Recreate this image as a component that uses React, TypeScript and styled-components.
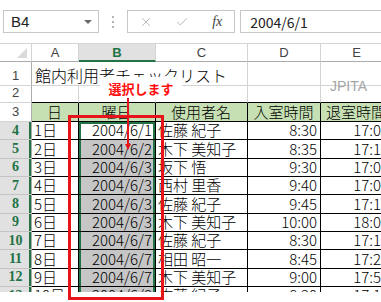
import { Fragment } from 'react'
import styled, { createGlobalStyle } from 'styled-components'
import { X, Check } from 'lucide-react'

const JP = `"Noto Sans CJK JP", "Noto Sans", sans-serif`
const GREEN = '#217346'
const GRID = '#d4d4d4'
const RED = '#e8141b'

const GlobalStyle = createGlobalStyle`
  html, body { margin: 0; padding: 0; background: #fff; }
  body { font-family: ${JP}; }
`

// ─── Formula bar ──────────────────────────────────────────────────────────────

const Screen = styled.div`
  position: relative;
  width: 381px;
  height: 302px;
  overflow: hidden;
  background: #fff;
`

const FormulaBar = styled.div`
  height: 43px;
  box-sizing: border-box;
  padding: 10px 0 0 3px;
  display: flex;
  align-items: flex-start;
`

const NameBox = styled.div`
  width: 102px;
  height: 23px;
  box-sizing: border-box;
  border: 1px solid #c6c6c6;
  display: flex;
  align-items: center;
  justify-content: space-between;
  padding: 0 6px 0 7px;
  font-family: "Liberation Sans", sans-serif;
  font-size: 15px;
  color: #222;
`

const Caret = styled.span`
  width: 0;
  height: 0;
  border-left: 4px solid transparent;
  border-right: 4px solid transparent;
  border-top: 4px solid #6b6b6b;
`

const Dots = styled.div`
  width: 30px;
  height: 23px;
  display: flex;
  flex-direction: column;
  align-items: center;
  justify-content: center;
  gap: 3px;

  i {
    width: 2px;
    height: 2px;
    background: #b4b4b4;
  }
`

const ButtonBox = styled.div`
  width: 108px;
  height: 23px;
  box-sizing: border-box;
  border: 1px solid #c6c6c6;
  display: grid;
  grid-template-columns: 36px 36px 34px;
  align-items: center;
  justify-items: center;
  color: #b4b4b4;
`

const Fx = styled.span`
  font-family: "Liberation Serif", serif;
  font-style: italic;
  font-size: 14px;
  color: #444;
`

const FormulaInput = styled.div`
  margin-left: 5px;
  width: 150px;
  height: 23px;
  box-sizing: border-box;
  border: 1px solid #c6c6c6;
  border-right: none;
  display: flex;
  align-items: center;
  padding-left: 9px;
  font-family: ${JP};
  font-size: 14px;
  color: #222;
`

// ─── Sheet grid ───────────────────────────────────────────────────────────────

const Sheet = styled.div`
  width: 400px;
  height: 249px;
  overflow: hidden;
  display: grid;
  grid-template-columns: 32px 47px 77px 92px 73px 72px;
  grid-template-rows: 18px 24px 17px 19px repeat(10, 18.33px);
  border-top: 1px solid ${GRID};
  box-sizing: border-box;
`

const Corner = styled.div`
  position: relative;
  border-right: 1px solid ${GRID};
  border-bottom: 1px solid #ababab;

  &::after {
    content: '';
    position: absolute;
    right: 4px;
    bottom: 3px;
    border-left: 10px solid transparent;
    border-bottom: 10px solid #dadada;
  }
`

const ColHead = styled.div<{ $sel?: boolean }>`
  box-sizing: border-box;
  display: flex;
  align-items: center;
  justify-content: center;
  border-right: 1px solid ${GRID};
  border-bottom: ${({ $sel }) => ($sel ? `2px solid ${GREEN}` : '1px solid #ababab')};
  background: ${({ $sel }) => ($sel ? '#e1e1e1' : '#fff')};
  color: ${({ $sel }) => ($sel ? GREEN : '#444')};
  font-family: "Liberation Sans", sans-serif;
  font-weight: ${({ $sel }) => ($sel ? 700 : 400)};
  font-size: 13px;
`

const RowHead = styled.div<{ $sel?: boolean }>`
  box-sizing: border-box;
  display: flex;
  align-items: ${({ $sel }) => ($sel ? 'center' : 'flex-end')};
  justify-content: center;
  padding-bottom: ${({ $sel }) => ($sel ? 0 : 2)}px;
  border-bottom: 1px solid ${({ $sel }) => ($sel ? '#c4c4c4' : GRID)};
  border-right: 1px solid #ababab;
  box-shadow: ${({ $sel }) => ($sel ? `inset -2px 0 ${GREEN}` : 'none')};
  background: ${({ $sel }) => ($sel ? '#e1e1e1' : '#fff')};
  color: ${({ $sel }) => ($sel ? GREEN : '#444')};
  font-family: ${({ $sel }) => ($sel ? '"Liberation Serif", serif' : '"Liberation Sans", sans-serif')};
  font-weight: ${({ $sel }) => ($sel ? 700 : 400)};
  font-size: ${({ $sel }) => ($sel ? 14 : 13)}px;
`

type Align = 'left' | 'right' | 'center'
type Sel = 'active' | 'range'

const Cell = styled.div<{ $table?: boolean; $edge?: boolean; $align?: Align; $head?: boolean; $sel?: Sel }>`
  box-sizing: border-box;
  display: flex;
  align-items: flex-end;
  justify-content: ${({ $align }) =>
    $align === 'right' ? 'flex-end' : $align === 'center' ? 'center' : 'flex-start'};
  padding: 0 3px 1px 2px;
  border-right: 1px solid ${({ $table }) => ($table ? '#000' : GRID)};
  border-bottom: 1px solid ${({ $table, $edge }) => ($table || $edge ? '#000' : GRID)};
  background: ${({ $head, $sel }) => ($head ? '#c6e0b4' : $sel === 'range' ? '#c6c6c6' : '#fff')};
  box-shadow: ${({ $sel }) =>
    $sel === 'active'
      ? `inset 2px 0 ${GREEN}, inset -2px 0 ${GREEN}, inset 0 2px ${GREEN}`
      : $sel === 'range'
        ? `inset 2px 0 ${GREEN}, inset -2px 0 ${GREEN}`
        : 'none'};
  font-family: ${JP};
  font-weight: 300;
  font-size: 15px;
  line-height: 16px;
  color: #000;
  white-space: nowrap;
  overflow: hidden;
`

const TitleCell = styled.div`
  grid-column: 2 / span 3;
  box-sizing: border-box;
  display: flex;
  align-items: flex-end;
  padding: 0 0 2px 3px;
  border-right: 1px solid ${GRID};
  border-bottom: 1px solid ${GRID};
  font-family: ${JP};
  font-weight: 300;
  font-size: 16px;
  line-height: 16px;
  color: #000;
  white-space: nowrap;
`

// ─── Annotations drawn over the sheet ─────────────────────────────────────────

const RedFrame = styled.div`
  position: absolute;
  left: 68px;
  top: 115px;
  width: 96px;
  height: 185px;
  box-sizing: border-box;
  border: 3px solid ${RED};
`

const Callout = styled.div`
  position: absolute;
  left: 100px;
  top: 77px;
  width: 82px;
  height: 23px;
  background: #fff;
  display: flex;
  align-items: center;
  justify-content: center;
  color: #ff1010;
  font-family: ${JP};
  font-weight: 700;
  font-size: 13px;
`

const Arrow = styled.svg`
  position: absolute;
  left: 124px;
  top: 98px;
`

const Watermark = styled.div`
  position: absolute;
  left: 330px;
  top: 78px;
  color: #a6a6a6;
  font-family: "Liberation Sans", sans-serif;
  font-size: 14px;
`

const COLS = ['A', 'B', 'C', 'D', 'E']

const ROWS: [string, string, string, string, string][] = [
  ['1日', '2004/6/1', '佐藤 紀子', '8:30', '17:00'],
  ['2日', '2004/6/2', '木下 美知子', '8:35', '17:10'],
  ['3日', '2004/6/3', '坂下 悟', '9:30', '17:00'],
  ['4日', '2004/6/3', '西村 里香', '9:40', '17:00'],
  ['5日', '2004/6/3', '佐藤 紀子', '9:45', '17:10'],
  ['6日', '2004/6/3', '木下 美知子', '10:00', '18:00'],
  ['7日', '2004/6/7', '佐藤 紀子', '8:30', '17:10'],
  ['8日', '2004/6/7', '相田 昭一', '8:45', '17:20'],
  ['9日', '2004/6/7', '木下 美知子', '9:00', '17:50'],
  ['10日', '2004/6/8', '佐藤 紀子', '8:30', '17:10'],
]

const HEADS = ['日', '曜日', '使用者名', '入室時間', '退室時間']
const ALIGN: Align[] = ['left', 'right', 'left', 'right', 'right']

export default function App() {
  return (
    <Screen>
      <GlobalStyle />
      <FormulaBar>
        <NameBox>
          B4
          <Caret />
        </NameBox>
        <Dots>
          <i />
          <i />
          <i />
        </Dots>
        <ButtonBox>
          <X size={14} strokeWidth={1.6} />
          <Check size={14} strokeWidth={1.6} />
          <Fx>fx</Fx>
        </ButtonBox>
        <FormulaInput>2004/6/1</FormulaInput>
      </FormulaBar>

      <Sheet>
        <Corner />
        {COLS.map((c) => (
          <ColHead key={c} $sel={c === 'B'}>{c}</ColHead>
        ))}

        <RowHead>1</RowHead>
        <TitleCell>館内利用者チェックリスト</TitleCell>
        <Cell />
        <Cell />

        <RowHead>2</RowHead>
        {COLS.map((c) => (
          <Cell key={c} $edge />
        ))}

        <RowHead>3</RowHead>
        {HEADS.map((h) => (
          <Cell key={h} $table $head $align="center">{h}</Cell>
        ))}

        {ROWS.map((row, i) => (
          <Fragment key={i}>
            <RowHead $sel>{i + 4}</RowHead>
            {row.map((v, j) => (
              <Cell
                key={j}
                $table
                $align={ALIGN[j]}
                $sel={j === 1 ? (i === 0 ? 'active' : 'range') : undefined}
              >
                {v}
              </Cell>
            ))}
          </Fragment>
        ))}
      </Sheet>

      <Watermark>JPITA</Watermark>
      <Callout>選択します</Callout>
      <Arrow width="8" height="54" viewBox="0 0 8 54">
        <line x1="4" y1="0" x2="4" y2="48" stroke={RED} strokeWidth="2" />
        <polygon points="1,46 7,46 4,52" fill={RED} />
      </Arrow>
      <RedFrame />
    </Screen>
  )
}
